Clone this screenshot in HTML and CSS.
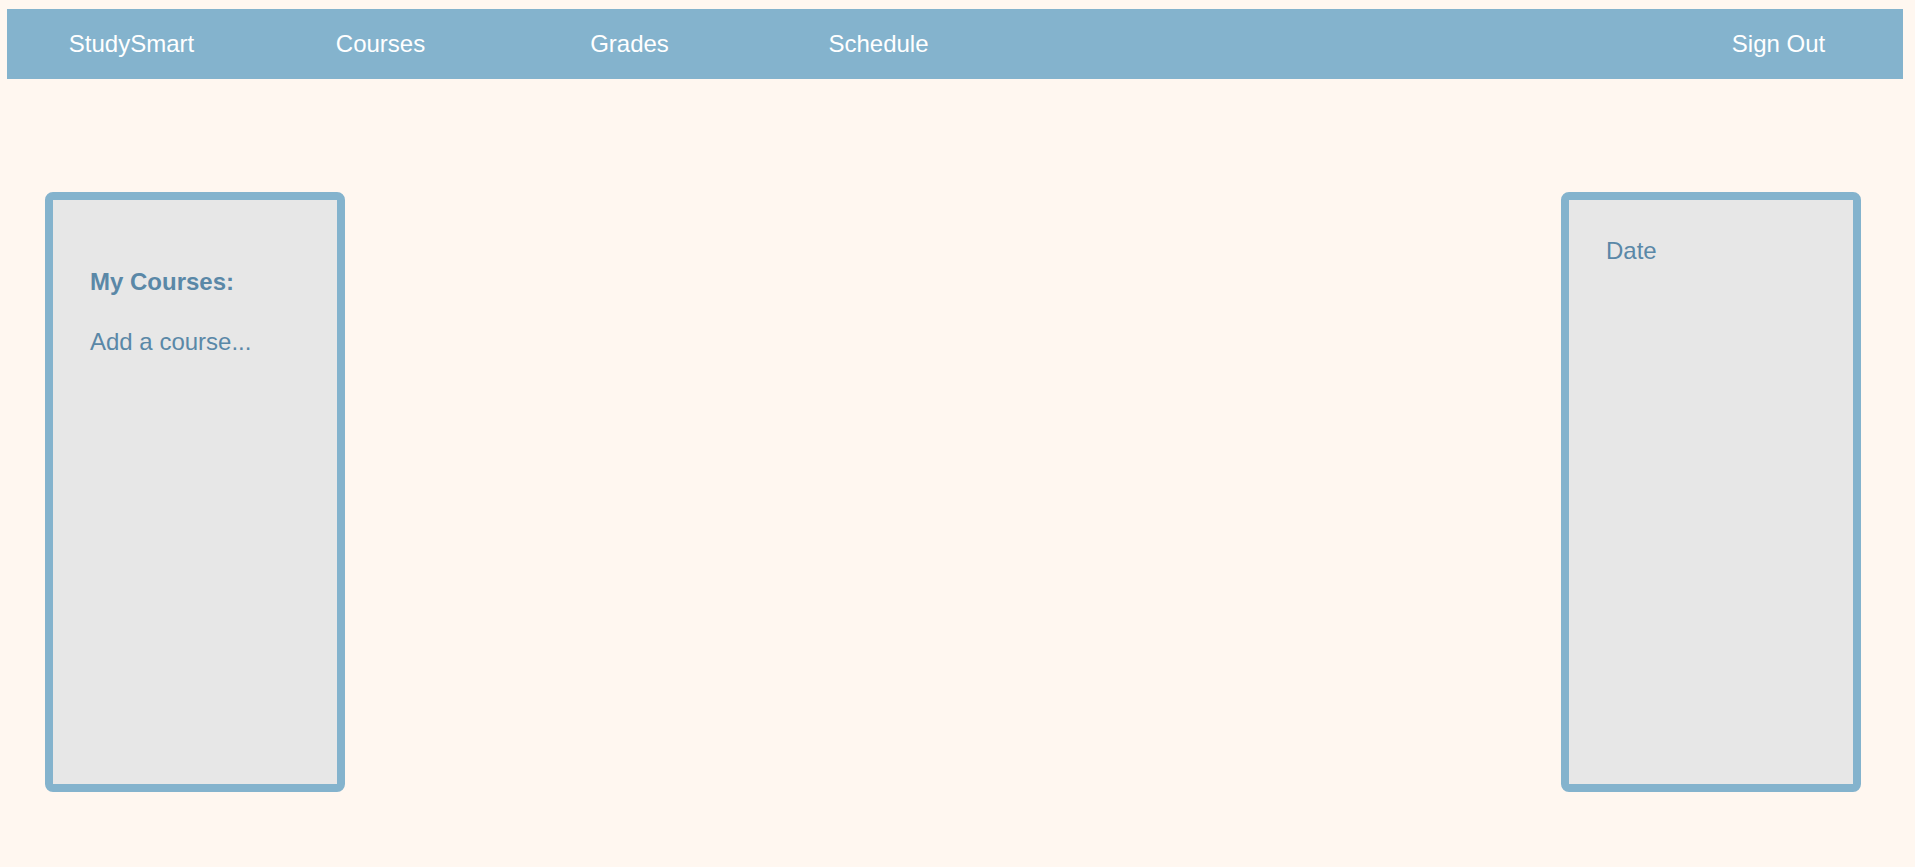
FILE: index.html
```html
<!DOCTYPE html>
<html lang="en">
<head>
<meta charset="utf-8">
<title>StudySmart</title>
<link rel="stylesheet" href="styles.css">
</head>
<body>
<nav class="topnav">
  <a class="nav-item" href="#">StudySmart</a>
  <a class="nav-item" href="#">Courses</a>
  <a class="nav-item" href="#">Grades</a>
  <a class="nav-item" href="#">Schedule</a>
  <a class="nav-item nav-signout" href="#">Sign Out</a>
</nav>
<main class="layout">
  <aside class="panel panel-courses">
    <h3 class="panel-title">My Courses:</h3>
    <p class="panel-link">Add a course...</p>
  </aside>
  <aside class="panel panel-date">
    <div class="panel-text">Date</div>
  </aside>
</main>
</body>
</html>
```
FILE: styles.css
```css
html, body {
  margin: 0;
  padding: 0;
  background: #fff7f0;
  font-family: "Liberation Sans", Arial, sans-serif;
}

.topnav {
  display: flex;
  align-items: center;
  height: 70px;
  margin: 9px 12px 0 7px;
  background: #84b3cd;
}

.nav-item {
  display: block;
  width: 249px;
  text-align: center;
  color: #ffffff;
  font-size: 24px;
  text-decoration: none;
}

.nav-signout {
  margin-left: auto;
}

.layout {
  display: flex;
  justify-content: space-between;
  align-items: flex-start;
  padding: 113px 54px 0 45px;
}

.panel {
  box-sizing: border-box;
  width: 300px;
  height: 600px;
  background: #e7e7e7;
  border: 8px solid #84b3cd;
  border-radius: 8px;
  color: #5a88a7;
  font-size: 24px;
}

.panel-courses {
  padding: 68px 36px 0 37px;
}

.panel-title {
  margin: 0;
  font-size: 24px;
  font-weight: bold;
}

.panel-link {
  margin: 32px 0 0;
}

.panel-date {
  padding: 37px 36px 0 37px;
}
```
